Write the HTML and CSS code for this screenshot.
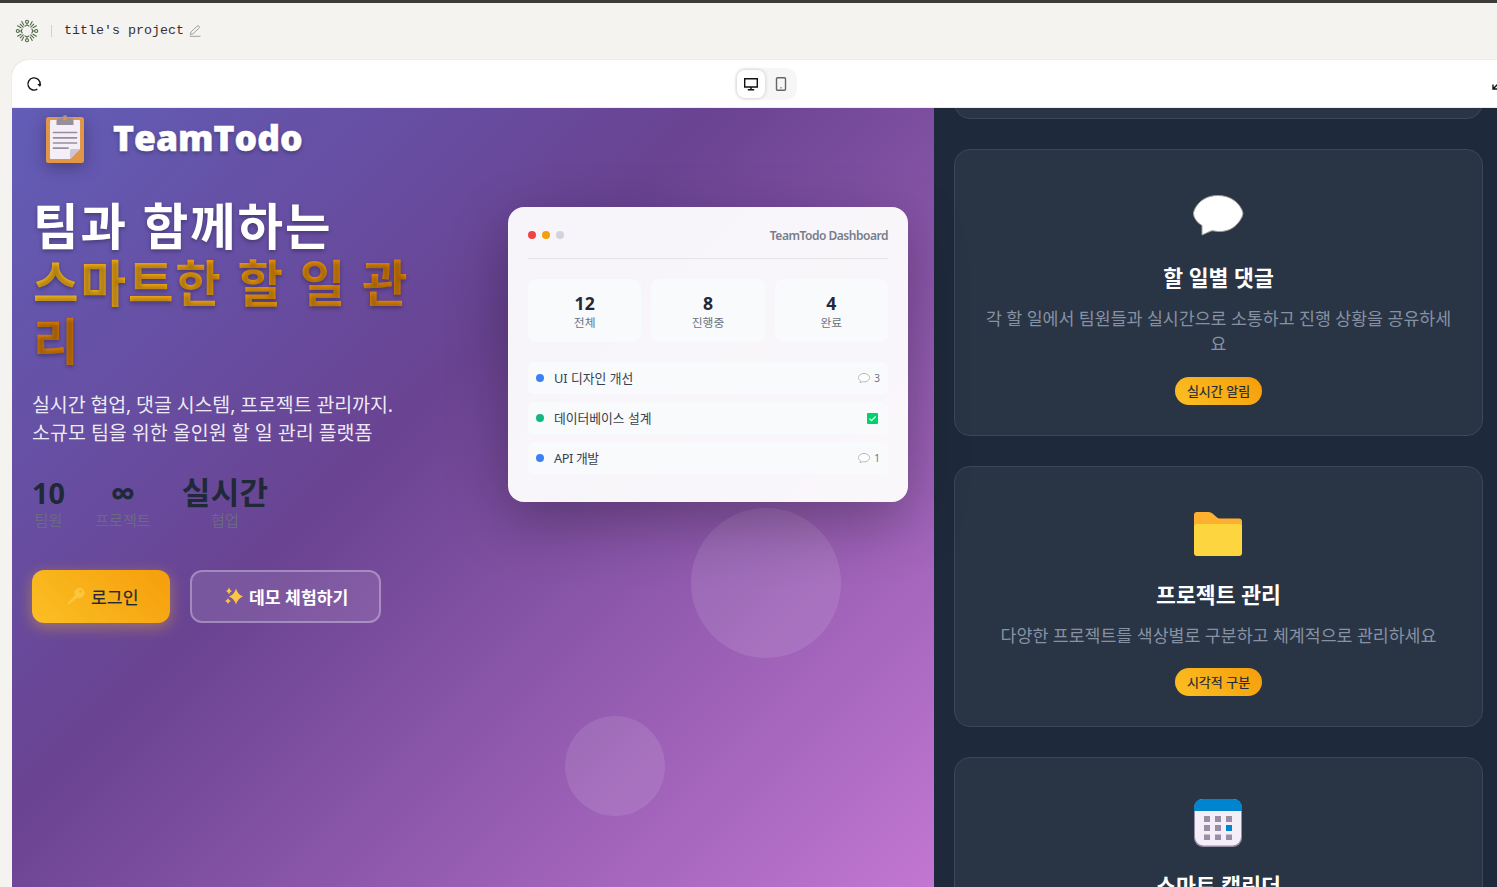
FILE: index.html
```html
<!DOCTYPE html>
<html lang="ko">
<head>
<meta charset="utf-8">
<title>title's project</title>
<link rel="stylesheet" href="styles.css">
</head>
<body>
<svg class="defs" width="0" height="0" aria-hidden="true">
  <symbol id="bubble" viewBox="0 0 52 42">
    <path d="M26 1.500C37 1.500 46 7 50 16Q52 19.500 50 23C45 33 37 38 26 37.500C24 37.500 21 36.500 19 37L10 41V31.500C6 29 4 27 2 22.500Q.5 19 2.500 15.500C7 6.500 15 1.500 26 1.500Z"/>
  </symbol>
</svg>
<header class="topbar">
  <svg class="brand" viewBox="-12 -12 24 24">
    <g id="ray"><circle cx="0" cy="-9.200" r="1.500"/><path d="M0-7.600V-5.800M-2-4.800Q0-6.600 2-4.800M3.300-6L5.200-9.400M6-3.300L9.400-5.200M3.800-3.800L6.800-6.800"/></g>
    <use href="#ray" transform="rotate(90)"/><use href="#ray" transform="rotate(180)"/><use href="#ray" transform="rotate(270)"/>
  </svg>
  <span class="sep"></span>
  <span class="project">title's project</span>
  <svg class="pencil" viewBox="0 0 12 12"><path d="M.7 11.300H11.500M1.300 9.500L1.900 7L8 1.200Q9.200.3 10.100 1.300T9.900 3.200L3.900 8.900Z"/></svg>
</header>
<main class="frame">
  <div class="toolbar">
    <svg class="reload" viewBox="0 0 16 16"><path d="M11.300 13.100A6.100 6.100 0 1 1 14.100 8.500"/><path class="solid" d="M11.300 8H15.400L14 11Z"/></svg>
    <div class="segment">
      <span class="seg active"><svg width="14" height="14" viewBox="0 0 14 14"><path d="M.7 1.700H13.300V10H.7ZM7 10V12.500M3.800 12.800H10.200"/></svg></span>
      <span class="seg"><svg width="14" height="14" viewBox="0 0 14 14"><rect x="2.500" y=".7" width="9" height="12.600" rx="1"/><path d="M6.500 10.800H7.500"/></svg></span>
    </div>
    <svg class="expand" viewBox="0 0 14 14"><path d="M1 8.500V13H5.500M1.500 12.500L5.500 8.500M8.500 1H13V5.500M12.500 1.500L8.500 5.500"/></svg>
  </div>
  <div class="preview">
    <section class="hero">
      <span class="orb orb-lg"></span><span class="orb orb-sm"></span>
      <div class="pitch">
        <div class="logo">
          <svg class="clipboard" viewBox="0 0 38 48"><rect y="2" width="38" height="46" rx="2.500" fill="#e19747"/><path d="M5 5H33Q34 5 34 6V34L24 44H5Q4 44 4 43V6Q4 5 5 5Z" fill="#f3eef8"/><path d="M24 44V35.500Q24 34 25.500 34H34Z" fill="#cdc4d6"/><path d="M10.500 10V6Q10.500 3 13.500 3H16.300Q16.700 0 19 0T21.700 3H24.500Q27.500 3 27.500 6V10Z" fill="#998f98"/><circle cx="19" cy="3.500" r="1.800" fill="#e19747"/><path d="M7.500 17.500H30.500M7.500 22.800H30.500M7.500 28H30.500M7.500 33.200H22" stroke="#998f98" stroke-width="1.700" stroke-linecap="round"/></svg>
          <span class="logo-text">TeamTodo</span>
        </div>
        <h1 class="headline">팀과 함께하는<br><span class="gold">스마트한 할 일 관<br>리</span></h1>
        <p class="lead"><span class="tight">실시간 협업, 댓글 시스템, 프로젝트 관리까지.</span><br>소규모 팀을 위한 올인원 할 일 관리 플랫폼</p>
        <div class="facts">
          <div class="fact"><b>10</b><span>팀원</span></div>
          <div class="fact"><b class="infinity">∞</b><span>프로젝트</span></div>
          <div class="fact"><b class="hangul">실시간</b><span>협업</span></div>
        </div>
        <div class="actions">
          <a class="btn primary"><svg class="glyph" viewBox="0 0 18 18"><path d="M1 15.500L8.200 8.300A5 5 0 1 1 10.800 10.500L9 12H7.500V13.700H5.800V15.300H4.200L2.800 17H1Z" fill="#fcc63f"/><circle cx="13.500" cy="4.300" r="1.300" fill="#f9b01c"/></svg>로그인</a>
          <a class="btn ghost"><svg class="glyph" viewBox="0 0 18 18"><path d="M11 1.500Q12.800 7.700 18 9.500Q12.800 11.300 11 17.500Q9.200 11.300 4 9.500Q9.200 7.700 11 1.500ZM4 .500Q4.700 3.300 7 4Q4.700 4.700 4 7.500Q3.300 4.700 1 4Q3.300 3.300 4 .500ZM3 11Q3.700 13.300 6 14Q3.700 14.700 3 17Q2.300 14.700 0 14Q2.300 13.300 3 11Z" fill="#fcc547"/></svg>데모 체험하기</a>
        </div>
      </div>
      <div class="board">
        <div class="board-head"><span class="dots"><i class="red"></i><i class="amber"></i><i class="grey"></i></span><span class="board-title">TeamTodo Dashboard</span></div>
        <div class="counts">
          <div class="count"><b>12</b><span>전체</span></div>
          <div class="count"><b>8</b><span>진행중</span></div>
          <div class="count"><b>4</b><span>완료</span></div>
        </div>
        <div class="tasks">
          <div class="task"><i class="blue"></i><span>UI 디자인 개선</span><em><svg class="mini"><use href="#bubble"/></svg>3</em></div>
          <div class="task"><i class="green"></i><span>데이터베이스 설계</span><em><svg class="check" viewBox="0 0 11 11"><rect width="11" height="11" rx="1" fill="#00d26a"/><path d="M2.500 5.600L4.500 7.600L8.600 3.500" fill="none" stroke="#fff" stroke-width="1.200"/></svg></em></div>
          <div class="task"><i class="blue"></i><span class="latin">API 개발</span><em><svg class="mini"><use href="#bubble"/></svg>1</em></div>
        </div>
      </div>
    </section>
    <section class="features">
      <article class="card stub"></article>
      <article class="card tall">
        <div class="icon"><svg class="talk" width="52" height="42"><use href="#bubble"/></svg></div>
        <h3>할 일별 댓글</h3>
        <p>각 할 일에서 팀원들과 실시간으로 소통하고 진행 상황을 공유하세<br>요</p>
        <span class="badge">실시간 알림</span>
      </article>
      <article class="card">
        <div class="icon folder"><svg width="48" height="44" viewBox="0 0 48 44"><path d="M0 3Q0 0 3 0H14.500Q17 0 18.500 1.500L23 5.500Q24 6.500 26 6.500H45Q48 6.500 48 9.500V20H0Z" fill="#ffb02e"/><path d="M0 14.500Q0 12 2.500 12H45.500Q48 12 48 14.500V41Q48 44 45 44H3Q0 44 0 41Z" fill="#fcd53f"/></svg></div>
        <h3>프로젝트 관리</h3>
        <p>다양한 프로젝트를 색상별로 구분하고 체계적으로 관리하세요</p>
        <span class="badge">시각적 구분</span>
      </article>
      <article class="card">
        <div class="icon"><svg width="48" height="48" viewBox="0 0 48 48"><rect width="48" height="48" rx="9" fill="#998ea4"/><rect x="1" width="46" height="46.500" rx="8.500" fill="#f3eef8"/><path d="M0 12V9Q0 0 9 0H39Q48 0 48 9V12Z" fill="#0084ce"/><path d="M10 17h6v6h-6zM21 17h6v6h-6zM32 17h6v6h-6zM10 26h6v6h-6zM21 26h6v6h-6zM10 35.500h6v5.500h-6zM21 35.500h6v5.500h-6zM32 35.500h6v5.500h-6z" fill="#998ea4"/><path d="M32 26h6v6h-6z" fill="#0084ce"/></svg></div>
        <h3>스마트 캘린더</h3>
      </article>
    </section>
  </div>
</main>
</body>
</html>
```
FILE: styles.css
```css
* { box-sizing: border-box; }
html { overflow: hidden; }
body { margin: 0; height: 887px; overflow: hidden; background: #f5f3ef; border-top: 3px solid #3d3a3a; font-family: "Noto Sans", "Noto Sans CJK KR", sans-serif; }
.defs { position: absolute; }
h1, h3, p { margin: 0; }

.topbar { height: 57px; padding: 0 15px 2px; display: flex; align-items: center; }
.brand { width: 24px; height: 24px; fill: none; stroke: #53694a; stroke-width: 1.1; stroke-linecap: round; }
.sep { width: 1px; height: 12px; background: #d2d0cc; margin: 0 12px; }
.project { font: 13.33px/16px "Liberation Mono", monospace; color: #33312f; }
.pencil { width: 12px; height: 12px; margin: 1px 0 0 5px; fill: none; stroke: #a3a19e; }

.frame { width: 1497px; height: 827px; padding-left: 12px; }
.toolbar { height: 48px; width: 1500px; background: #fff; border-radius: 16px 0 0 0; border-bottom: 1px solid #ececec; padding: 0 6px 0 14px; display: flex; align-items: center; box-shadow: 0 0 1px rgba(0,0,0,.25); }
.reload { width: 16px; height: 16px; fill: none; stroke: #111; stroke-width: 1.4; }
.solid { fill: #111; stroke: none; }
.segment { width: 62px; height: 32px; margin: 0 auto 0 693px; padding: 2px; background: #f6f6f6; border-radius: 11px; display: flex; gap: 2px; }
.seg { width: 28px; height: 28px; border-radius: 8px; display: flex; align-items: center; justify-content: center; }
.seg svg { fill: none; stroke: #666; stroke-width: 1.4; }
.seg.active { background: #fff; box-shadow: 0 0 4px rgba(0,0,0,.18); }
.seg.active svg { stroke: #111; }
.expand { width: 14px; height: 14px; margin-bottom: 1px; fill: none; stroke: #111; stroke-width: 1.4; }

.preview { height: 779px; display: flex; overflow: hidden; }
.hero { position: relative; width: 922px; flex: none; padding: 0 26px 0 20px; display: flex; justify-content: space-between; background: linear-gradient(135deg, #5c71d3 -31.1%, #6a4392 41.7%, #d884e2 114.6%); }
.orb { position: absolute; border-radius: 50%; background: rgba(255,255,255,.1); }
.orb-lg { width: 150px; height: 150px; left: 679px; top: 399.5px; }
.orb-sm { width: 100px; height: 100px; left: 553px; top: 608.4px; }
.pitch { position: relative; width: 410px; padding-top: 7px; }
.logo { height: 48px; padding-left: 14px; display: flex; gap: 29px; }
.clipboard { width: 38px; height: 48px; filter: drop-shadow(0 4px 8px rgba(0,0,0,.3)); }
.logo-text { font: 800 35.5px/44px "Open Sans", sans-serif; color: #fff; -webkit-text-stroke: .5px #fff; text-shadow: 0 2px 4px rgba(0,0,0,.3); }
.headline { margin-top: 35px; padding-left: 1px; font-size: 49.5px; line-height: 57.4px; letter-spacing: 1.9px; font-weight: 700; color: #fff; text-shadow: 0 2px 4px rgba(0,0,0,.3); white-space: nowrap; }
.gold { background: linear-gradient(45deg, #fbbf24, #f59e0b, #d97706); -webkit-background-clip: text; background-clip: text; -webkit-text-fill-color: transparent; }
.lead { margin-top: 21px; font-size: 19.5px; line-height: 28.2px; color: rgba(255,255,255,.9); white-space: nowrap; }
.tight { letter-spacing: -.12px; }
.facts { margin-top: 27px; display: flex; gap: 30px; }
.fact { display: flex; flex-direction: column; align-items: center; }
.fact b { font-size: 28.8px; line-height: 35px; color: #1f2937; }
.fact b.infinity { font: 700 35px/35px "Open Sans", sans-serif; height: 35px; }
.fact b.hangul { font-size: 31px; letter-spacing: .3px; }
.fact span { font-size: 15.2px; line-height: 20px; color: #6b7280; opacity: .8; }
.fact:nth-child(3) { margin-left: 1px; }
.actions { margin-top: 40px; display: flex; gap: 20px; }
.btn { height: 53px; border-radius: 12px; display: flex; align-items: center; gap: 6px; font-size: 17.2px; white-space: nowrap; }
.glyph { width: 18px; height: 18px; }
.primary { width: 138px; padding-left: 35px; color: #1f2937; -webkit-text-stroke: .2px #1f2937; background: linear-gradient(45deg, #fbbf24, #f59e0b); box-shadow: 0 4px 15px rgba(251,191,36,.4); }
.ghost { width: 191px; padding-left: 33px; color: #fff; font-weight: 700; background: rgba(255,255,255,.1); border: 2px solid rgba(255,255,255,.3); }

.board { position: relative; width: 400px; height: 295px; margin-top: 99px; padding: 20px; border-radius: 16px; background: rgba(255,255,255,.95); box-shadow: 0 20px 60px rgba(0,0,0,.3); }
.board-head { height: 32px; padding-bottom: 15px; border-bottom: 1px solid #e5e3ea; display: flex; align-items: center; justify-content: space-between; }
.dots { display: flex; gap: 6px; }
.dots i, .task i { width: 8px; height: 8px; border-radius: 50%; }
.red { background: #ef4444; }
.amber { background: #f59e0b; }
.grey { background: #d1d5db; }
.board-title { font-size: 12px; font-weight: 600; letter-spacing: -.48px; color: #777d8a; }
.counts { margin-top: 20px; display: grid; grid-template-columns: repeat(3, 1fr); gap: 10px; }
.count { height: 63px; padding-top: 13px; border-radius: 8px; background: #f9fafb; display: flex; flex-direction: column; align-items: center; }
.count b { font-size: 17.6px; line-height: 22px; color: #1f2937; }
.count span { font-size: 11.8px; line-height: 16px; color: #6b7280; }
.tasks { margin-top: 20px; display: flex; flex-direction: column; gap: 8px; }
.task { height: 32px; padding: 0 8px; border-radius: 6px; background: #f9fafb; display: flex; align-items: center; font-size: 12.8px; color: #374151; }
.task span { margin-left: 10px; padding-bottom: 2px; flex: 1; }
.task .latin { letter-spacing: -.4px; }
.task em { display: flex; align-items: center; gap: 4px; font-style: normal; font-size: 10px; color: #6b7280; }
.blue { background: #3b82f6; }
.green { background: #10b981; }
.mini { width: 12px; height: 10px; fill: #fff; stroke: #9a9a9a; stroke-width: 3; }
.check { width: 11px; height: 11px; margin-right: 2px; }

.features { width: 563px; flex: none; padding: 0 14px 0 20px; background: #1e293b; display: flex; flex-direction: column; gap: 30px; }
.card { flex: none; height: 261px; padding-top: 30px; border: 1px solid #3c4757; border-radius: 16px; background: #293544; display: flex; flex-direction: column; align-items: center; }
.card.stub { height: 40px; margin-top: -29px; }
.card.tall { height: 287px; }
.icon { height: 68px; padding: 2px 1px 0 0; display: flex; align-items: center; justify-content: center; }
.icon.folder { padding-top: 6px; }
.talk { fill: #fff; stroke: #9b9b9b; stroke-width: 1; overflow: visible; }
.card h3 { margin-top: 14px; font-size: 21.6px; line-height: 32px; font-weight: 700; color: #fff; white-space: nowrap; }
.card p { margin-top: 13px; font-size: 17.3px; line-height: 24.5px; color: #8791a4; text-align: center; white-space: nowrap; }
.badge { margin-top: 19px; width: 87px; height: 28px; border-radius: 14px; background: linear-gradient(45deg, #fbbf24, #f59e0b); font-size: 13px; line-height: 28px; text-align: center; color: #1f2937; -webkit-text-stroke: .2px #1f2937; white-space: nowrap; }
.tall .badge { margin-top: 21px; }
```
